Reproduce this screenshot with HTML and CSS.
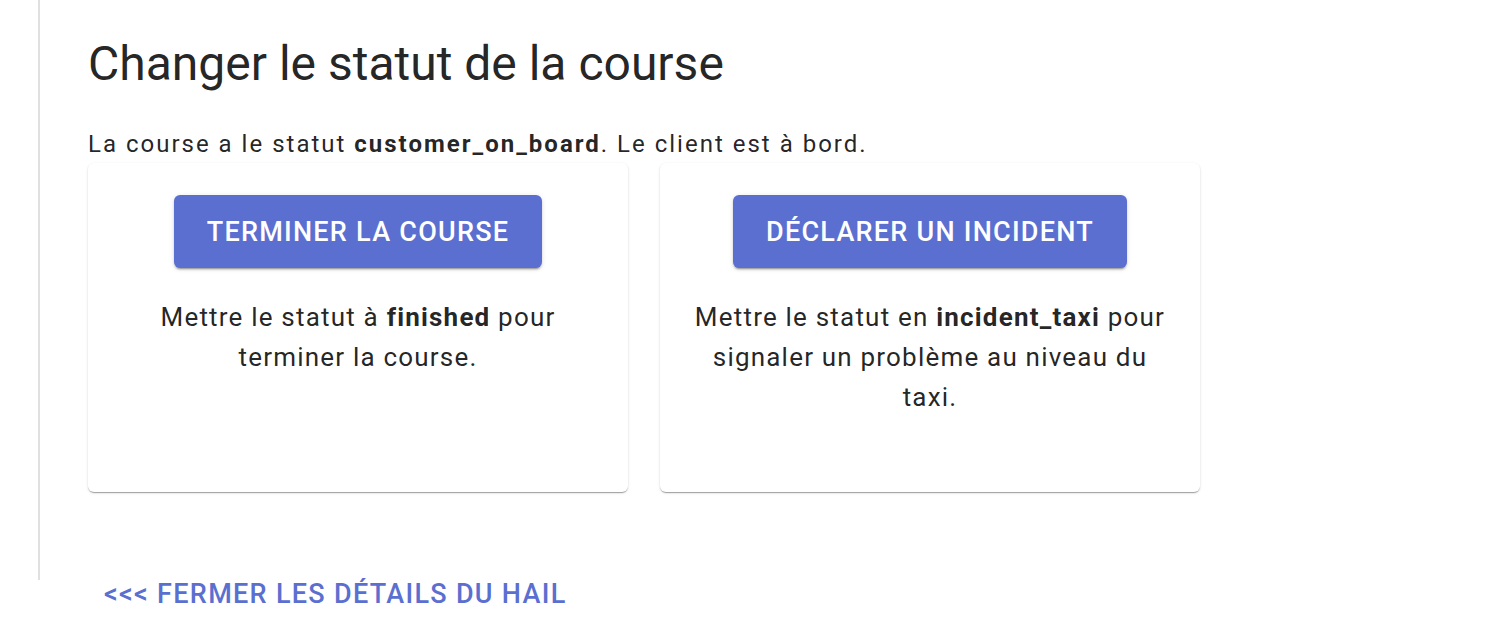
FILE: index.html
```html
<!DOCTYPE html>
<html lang="fr">
<head>
<meta charset="utf-8">
<title>Changer le statut de la course</title>
<link rel="stylesheet" href="styles.css">
</head>
<body>
<div class="page">
  <div class="panel">
    <h3 class="title">Changer le statut de la course</h3>
    <p class="status">La course a le statut <strong>customer_on_board</strong>. Le client est à bord.</p>
    <div class="cards">
      <div class="card">
        <button class="btn">Terminer la course</button>
        <p class="desc">Mettre le statut à <strong>finished</strong> pour terminer la course.</p>
      </div>
      <div class="card">
        <button class="btn">Déclarer un incident</button>
        <p class="desc">Mettre le statut en <strong>incident_taxi</strong> pour signaler un problème au niveau du taxi.</p>
      </div>
    </div>
  </div>
  <div class="footer">
    <button class="link">&lt;&lt;&lt; Fermer les détails du hail</button>
  </div>
</div>
</body>
</html>
```

FILE: styles.css
```css
html, body {
  margin: 0;
  padding: 0;
  background: #ffffff;
}
body {
  font-family: Roboto, "Liberation Sans", sans-serif;
  color: rgba(0, 0, 0, 0.87);
}
.page {
  padding-left: 38px;
}
.panel {
  border-left: 2px solid #e0e0e0;
  padding: 36px 0 88px 48px;
}
.title {
  margin: 0;
  font-size: 48px;
  font-weight: 400;
  line-height: 56px;
}
.status {
  margin: 34px 0 1px;
  font-size: 24px;
  line-height: 36px;
  letter-spacing: 2px;
}
.status strong, .desc strong {
  font-weight: 700;
}
.cards {
  display: flex;
  gap: 32px;
}
.card {
  width: 540px;
  min-height: 329px;
  box-sizing: border-box;
  padding: 32px 32px;
  display: flex;
  flex-direction: column;
  align-items: center;
  background: #fff;
  border-radius: 6px;
  box-shadow: 0 2px 1px -1px rgba(0,0,0,0.2), 0 1px 1px 0 rgba(0,0,0,0.14), 0 1px 3px 0 rgba(0,0,0,0.12);
}
.btn {
  height: 73px;
  padding: 0 33px;
  border: none;
  border-radius: 6px;
  background: #5a6fd0;
  color: #fff;
  font-family: Roboto, "Liberation Sans", sans-serif;
  font-size: 27px;
  font-weight: 500;
  letter-spacing: 1.25px;
  text-transform: uppercase;
  box-shadow: 0 3px 1px -2px rgba(0,0,0,0.2), 0 2px 2px 0 rgba(0,0,0,0.14), 0 1px 5px 0 rgba(0,0,0,0.12);
}
.desc {
  margin: 29px 0 0;
  font-size: 26px;
  line-height: 40px;
  letter-spacing: 1.2px;
  text-align: center;
}
.footer {
  padding-left: 50px;
  margin-top: -8px;
}
.link {
  border: none;
  background: none;
  padding: 0 16px;
  height: 44px;
  color: #5a6fd0;
  font-family: Roboto, "Liberation Sans", sans-serif;
  font-size: 27px;
  font-weight: 500;
  letter-spacing: 1.3px;
  text-transform: uppercase;
}
```
